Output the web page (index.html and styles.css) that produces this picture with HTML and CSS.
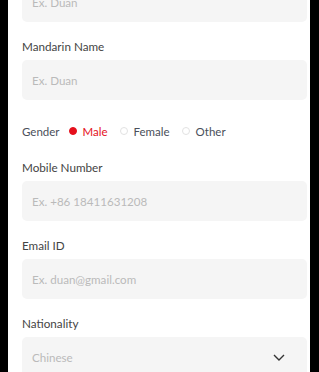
FILE: index.html
```html
<!DOCTYPE html>
<html>
  <head>
    <meta charset="utf-8" />
    <title>Profile</title>
    <link rel="stylesheet" href="styles.css">
  </head>

  <body>
    <div class="screen">
      <form class="profile">
        <div class="field">
          <label for="en-name">English Name</label>
          <input type="text" id="en-name" placeholder="Ex. Duan" />
        </div>
        <div class="field">
          <label for="cn-name">Mandarin Name</label>
          <input type="text" id="cn-name" placeholder="Ex. Duan" />
        </div>
        <div class="gender">
          <span class="gender-label">Gender</span>
          <label class="opt selected"><i class="dot"></i>Male</label>
          <label class="opt"><i class="dot"></i>Female</label>
          <label class="opt"><i class="dot"></i>Other</label>
        </div>
        <div class="field">
          <label for="mobile">Mobile Number</label>
          <input type="text" id="mobile" placeholder="Ex. +86 18411631208" />
        </div>
        <div class="field">
          <label for="email">Email ID</label>
          <input type="text" id="email" placeholder="Ex. duan@gmail.com" />
        </div>
        <div class="field">
          <label>Nationality</label>
          <div class="select">
            <span>Chinese</span>
            <svg width="12" height="7" viewBox="0 0 12 7">
              <path d="M1 1l5 5 5-5" fill="none" stroke="#333" stroke-width="1.4" />
            </svg>
          </div>
        </div>
      </form>
    </div>
  </body>
</html>
```

FILE: styles.css
```css
* {
  box-sizing: border-box;
}

html,
body {
  margin: 0;
  padding: 0;
}

body {
  font-family: Lato, "Liberation Sans", sans-serif;
  background: #000;
  height: 372px;
  overflow: hidden;
}

.screen {
  margin: 0 9px 0 8px;
  height: 372px;
  background: #fff;
  padding: 0 3px 0 14px;
  overflow: hidden;
}

.profile {
  margin-top: -40px;
  display: flex;
  flex-direction: column;
}

.field {
  display: flex;
  flex-direction: column;
  gap: 6px;
  margin-bottom: 16px;
}

.field > label {
  font-size: 11.7px;
  line-height: 16px;
  color: #444;
}

input[type="text"],
.select {
  height: 40px;
  width: 100%;
  border: none;
  border-radius: 5px;
  background: #f5f5f5;
  padding: 0 10px;
  font-family: inherit;
  font-size: 11.6px;
  color: #333;
  outline: none;
}

input::placeholder,
.select span {
  color: #bababa;
}

.select {
  display: flex;
  align-items: center;
  justify-content: space-between;
  padding-right: 22px;
}

.gender {
  display: flex;
  align-items: center;
  height: 28px;
  padding-top: 2px;
  margin-bottom: 15px;
  font-size: 11.5px;
  color: #4a4f5a;
}

.gender-label {
  margin-right: 9px;
}

.opt {
  display: flex;
  align-items: center;
  gap: 6px;
  margin-right: 12px;
}

.dot {
  width: 8px;
  height: 8px;
  border-radius: 50%;
  border: 1px solid #e2e2e2;
}

.opt.selected {
  color: #e5101c;
}

.opt.selected .dot {
  background: #e5101c;
  border-color: #e5101c;
}
```
